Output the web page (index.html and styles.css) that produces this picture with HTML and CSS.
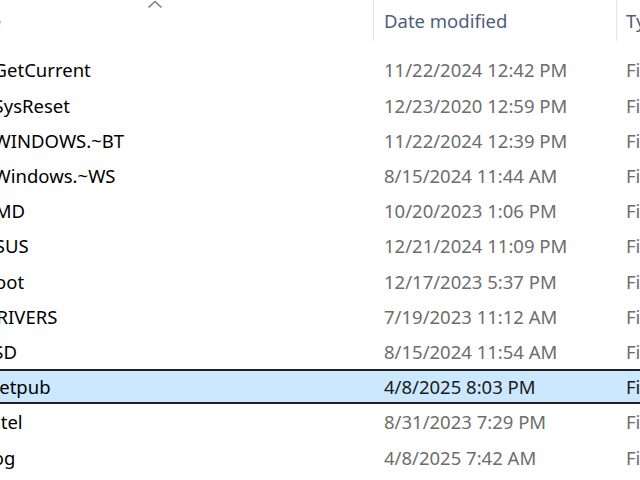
FILE: index.html
```html
<!DOCTYPE html>
<html>
<head>
<meta charset="utf-8">
<link rel="stylesheet" href="styles.css">
</head>
<body>
<div class="view">
  <div class="header">
    <div class="hcell hname">Name
      <svg class="sort" width="16" height="9" viewBox="0 0 16 9"><polyline points="1.5,7.5 8,1.5 14.5,7.5" fill="none" stroke="#7d7d7d" stroke-width="1.6"/></svg>
    </div>
    <div class="hcell hdate">Date modified</div>
    <div class="hcell htype">Type</div>
  </div>
  <div class="list">
    <div class="row"><div class="name">$GetCurrent</div><div class="date">11/22/2024 12:42 PM</div><div class="type">File folder</div></div>
    <div class="row"><div class="name">$SysReset</div><div class="date">12/23/2020 12:59 PM</div><div class="type">File folder</div></div>
    <div class="row"><div class="name">$WINDOWS.~BT</div><div class="date">11/22/2024 12:39 PM</div><div class="type">File folder</div></div>
    <div class="row"><div class="name">$Windows.~WS</div><div class="date">8/15/2024 11:44 AM</div><div class="type">File folder</div></div>
    <div class="row"><div class="name">AMD</div><div class="date">10/20/2023 1:06 PM</div><div class="type">File folder</div></div>
    <div class="row"><div class="name">ASUS</div><div class="date">12/21/2024 11:09 PM</div><div class="type">File folder</div></div>
    <div class="row"><div class="name">Boot</div><div class="date">12/17/2023 5:37 PM</div><div class="type">File folder</div></div>
    <div class="row"><div class="name">DRIVERS</div><div class="date">7/19/2023 11:12 AM</div><div class="type">File folder</div></div>
    <div class="row"><div class="name">ESD</div><div class="date">8/15/2024 11:54 AM</div><div class="type">File folder</div></div>
    <div class="row selected"><div class="name">inetpub</div><div class="date">4/8/2025 8:03 PM</div><div class="type">File folder</div></div>
    <div class="row"><div class="name">Intel</div><div class="date">8/31/2023 7:29 PM</div><div class="type">File folder</div></div>
    <div class="row"><div class="name">Log</div><div class="date">4/8/2025 7:42 AM</div><div class="type">File folder</div></div>
  </div>
</div>
</body>
</html>
```
FILE: styles.css
```css
html, body {
  margin: 0;
  padding: 0;
  background: #ffffff;
  width: 640px;
  height: 480px;
  overflow: hidden;
}
.view {
  margin-left: -70px;
  width: 900px;
  font-family: "Noto Sans", "Liberation Sans", sans-serif;
  font-size: 18.5px;
}
.header {
  display: grid;
  grid-template-columns: 444px 243px 1fr;
  height: 41px;
}
.hcell {
  position: relative;
  display: flex;
  align-items: center;
  color: #4c607a;
  border-right: 1px solid #e5e5e5;
  white-space: nowrap;
}
.hname { padding-left: 19px; }
.hdate { padding-left: 10px; }
.htype { padding-left: 9px; border-right: none; }
.sort {
  position: absolute;
  left: 217px;
  top: 0px;
}
.list {
  padding-top: 11.4px;
}
.row {
  display: grid;
  grid-template-columns: 444px 243px 1fr;
  height: 35.2px;
  align-items: center;
  box-sizing: border-box;
  white-space: nowrap;
}
.name {
  padding-left: 53px;
  color: #000000;
}
.date {
  padding-left: 10px;
  color: #6d6d6d;
}
.type {
  padding-left: 9px;
  color: #6d6d6d;
}
.row.selected {
  background: #cce8ff;
  border-top: 2px solid #1f1f1f;
  border-bottom: 2px solid #1f1f1f;
}
.row.selected .date,
.row.selected .type {
  color: #1a1a1a;
}
```
